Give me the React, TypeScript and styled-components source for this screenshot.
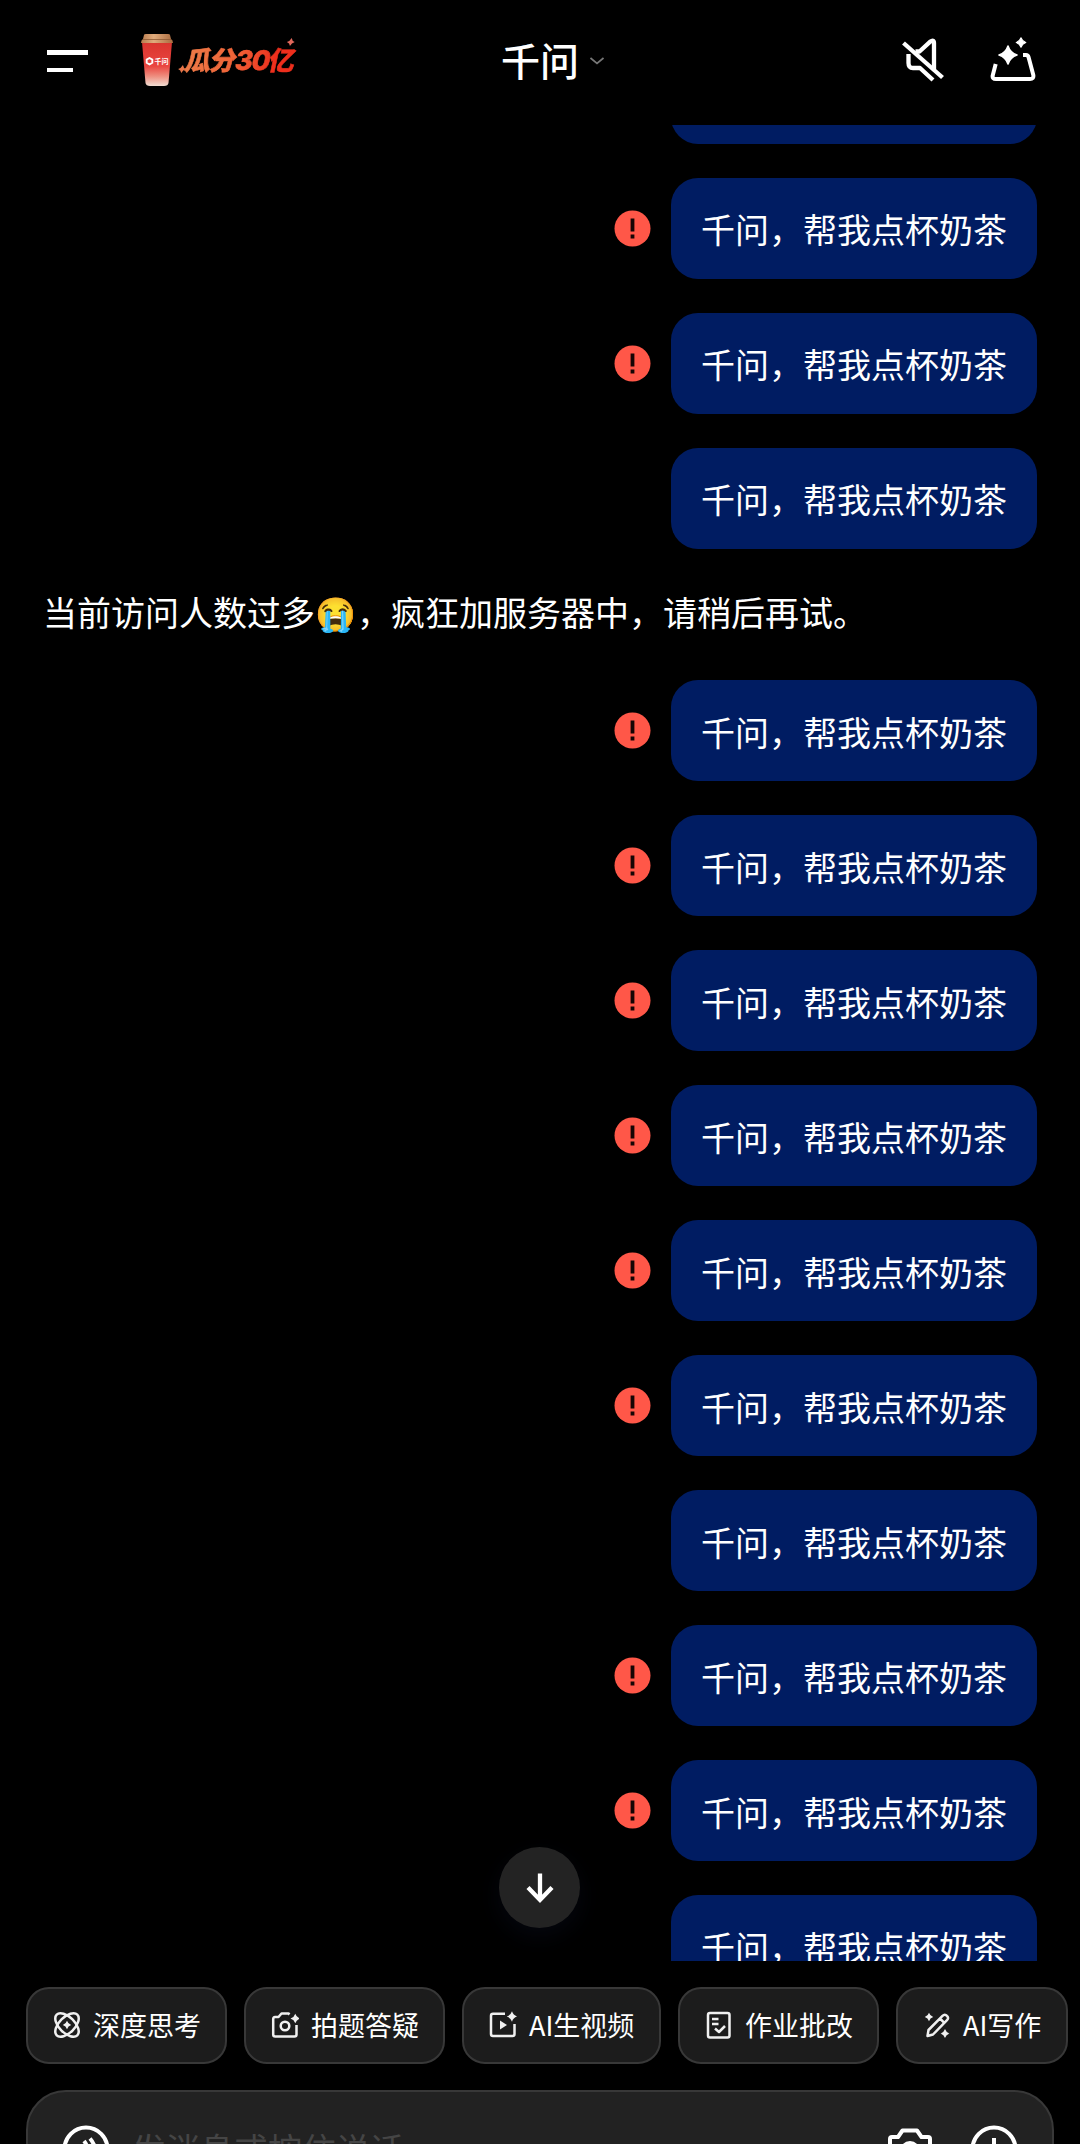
import React from "react";
import styled, { createGlobalStyle } from "styled-components";

const GlobalStyle = createGlobalStyle`
  body { margin: 0; background: #000; }
  * { box-sizing: border-box; }
`;

const Screen = styled.div`
  position: relative;
  display: flex;
  flex-direction: column;
  width: 1080px;
  height: 2144px;
  overflow: hidden;
  background: #000;
  color: #fff;
  font-family: "Noto Sans CJK SC", "Noto Color Emoji", sans-serif;
`;

const Header = styled.header`
  flex: none;
  display: grid;
  grid-template-columns: 454px 1fr auto;
  align-items: center;
  height: 125px;
  padding: 0 44px 5px 47px;
`;

const HeaderSide = styled.div<{ $end?: boolean }>`
  display: flex;
  align-items: center;
  justify-content: ${(p) => (p.$end ? "flex-end" : "flex-start")};
  gap: ${(p) => (p.$end ? "46px" : "0")};
`;

const MenuButton = styled.div`
  display: flex;
  flex-direction: column;
  gap: 13px;
  margin-top: 2px;
`;

const MenuBar = styled.span<{ $width: number }>`
  width: ${(p) => p.$width}px;
  height: 4.6px;
  background: #fff;
`;

const Promo = styled.div`
  display: flex;
  align-items: center;
  margin-left: 52px;
`;

const PromoLabel = styled.div`
  position: relative;
  margin: 0 0 0 9px;
  padding: 0 5px 0 3px;
  font-size: 26px;
  line-height: 36px;
  font-weight: 900;
  letter-spacing: -1.2px;
  transform: skewX(-12deg);
  color: transparent;
  -webkit-text-stroke: 0.6px transparent;
  background: linear-gradient(90deg, #ee7c48 0%, #ef6237 45%, #ee2e1c 80%);
  background-clip: text;
  -webkit-background-clip: text;
`;

const PromoAmount = styled.span`
  font-family: Inter, "Noto Sans CJK SC", sans-serif;
  font-weight: 800;
  font-size: 27px;
`;

const Spark = styled.svg<{ $x: number; $y: number }>`
  position: absolute;
  left: ${(p) => p.$x}px;
  top: ${(p) => p.$y}px;
`;

const Title = styled.h1`
  display: flex;
  align-items: center;
  gap: 11px;
  margin: 0 0 3px;
  font-size: 39px;
  line-height: 58px;
  font-weight: 500;
`;

const Chevron = styled.svg`
  margin-top: 4px;
`;

const Messages = styled.main`
  flex: none;
  display: flex;
  flex-direction: column;
  gap: 34px;
  height: 1836px;
  padding: 0 43px;
  overflow: hidden;

  & > :first-child {
    margin-top: -82.4px;
  }
`;

const MessageRow = styled.div`
  flex: none;
  display: flex;
  align-items: center;
  justify-content: flex-end;
  gap: 20px;
  height: 101px;
`;

const Bubble = styled.div`
  height: 101px;
  padding: 26.300px 30px 24.700px;
  border-radius: 27px;
  background: #001c62;
  font-size: 34px;
  line-height: 50px;
  white-space: nowrap;
`;

const Reply = styled.div`
  flex: none;
  display: flex;
  align-items: center;
  height: 63.7px;
  padding-bottom: 4px;
  font-size: 34px;
  line-height: 50px;
  white-space: nowrap;
`;

const Emoji = styled.span`
  width: 42px;
  text-align: center;
  font-size: 33px;
`;

const ScrollDown = styled.button`
  position: absolute;
  left: 499px;
  top: 1847px;
  display: flex;
  align-items: center;
  justify-content: center;
  width: 81px;
  height: 81px;
  padding: 0;
  border: 0;
  border-radius: 50%;
  background: #232323;
  box-shadow: 0 8px 24px rgba(20, 26, 60, 0.25);
`;

const Chips = styled.nav`
  flex: none;
  display: flex;
  gap: 17px;
  padding: 26.400px 0 0 26px;
`;

const Chip = styled.div<{ $width: number }>`
  flex: none;
  display: flex;
  align-items: center;
  gap: 12px;
  width: ${(p) => p.$width}px;
  height: 77px;
  padding: 0 0 1px 25px;
  border: 2px solid #383838;
  border-radius: 23px;
  background: #1c1c1c;
  font-size: 27px;
  line-height: 40px;
  white-space: nowrap;
`;

const Composer = styled.footer`
  flex: none;
  display: flex;
  align-items: center;
  width: 1028px;
  height: 118px;
  margin: 26px 0 0 26px;
  padding: 0 34px;
  border: 2px solid #383838;
  border-radius: 40px;
  background: #222;
`;

const Placeholder = styled.span`
  flex: 1;
  padding-left: 22px;
  font-size: 34px;
  line-height: 50px;
  color: #454545;
`;

const ComposerActions = styled.div`
  display: flex;
  align-items: center;
  gap: 37px;
`;

const star = (cx: number, cy: number, r: number) => {
  const k = r * 0.24;
  return `M${cx} ${cy - r}Q${cx + k} ${cy - k} ${cx + r} ${cy}Q${cx + k} ${cy + k} ${cx} ${cy + r}Q${cx - k} ${cy + k} ${cx - r} ${cy}Q${cx - k} ${cy - k} ${cx} ${cy - r}Z`;
};

const Cup = () => (
  <svg width="34" height="54" viewBox="0 0 34 54">
    <defs>
      <linearGradient id="cup" x1="0" y1="0" x2="0" y2="1">
        <stop offset="0" stopColor="#d9342e" />
        <stop offset="0.55" stopColor="#ea4640" />
        <stop offset="0.78" stopColor="#ee8f80" />
        <stop offset="1" stopColor="#f1ddd2" />
      </linearGradient>
      <linearGradient id="lid" x1="0" y1="0" x2="1" y2="0">
        <stop offset="0" stopColor="#b87b4d" />
        <stop offset="0.4" stopColor="#e0ab7c" />
        <stop offset="1" stopColor="#a96b3f" />
      </linearGradient>
    </defs>
    <path d="M2 9H32L28.500 50Q28 53 24 53H10Q6 53 5.500 50Z" fill="url(#cup)" />
    <path d="M4 2Q4 1 6 1H28Q30 1 30 2L31 6Q33 7 33 10H1Q1 7 3 6Z" fill="url(#lid)" />
    <path d="M3 6.500H31" stroke="#8d5934" strokeWidth="0.8" />
    <path d="M9.500 25L12.300 26.600V29.800L9.500 31.400L6.700 29.800V26.600Z" fill="none" stroke="#fff" strokeWidth="1.900" />
    <text x="14.500" y="31" fontSize="7" fontWeight="700" fill="#fff" fontFamily="Noto Sans CJK SC, sans-serif">千问</text>
  </svg>
);

const MutedIcon = () => (
  <svg width="42" height="44" viewBox="0 0 42 44" fill="none" stroke="#fff" strokeWidth="4.300" strokeLinejoin="round">
    <path d="M1.500 5L40.500 39.500" />
    <path d="M13.500 13.500H17.500L28 3.800Q32 1 32 5V31" />
    <path d="M6.500 16V25Q6.500 30 11 30H18L31 42" />
  </svg>
);

const MagicBoxIcon = () => (
  <svg width="46" height="48" viewBox="0 0 46 48" fill="none" stroke="#fff" strokeWidth="4" strokeLinejoin="round" strokeLinecap="butt">
    <path d="M33 19H36Q38 19 38.500 21L43.300 39Q44 43 40 43H6Q2 43 2.700 39.500L5.700 28" />
    <path d={star(18, 19, 9)} fill="#fff" stroke="#fff" strokeWidth="1.600" />
    <path d={star(31, 6.5, 4.8)} fill="#fff" stroke="#fff" strokeWidth="1.100" />
  </svg>
);

const ErrorIcon = () => (
  <svg width="37" height="37" viewBox="0 0 37 37">
    <circle cx="18.500" cy="18.500" r="18" fill="#ff5748" />
    <rect x="16.600" y="8.500" width="3.800" height="13" fill="#160504" />
    <rect x="16.600" y="24.500" width="3.800" height="4" fill="#160504" />
  </svg>
);

const ArrowIcon = () => (
  <svg width="30" height="32" viewBox="0 0 30 32" fill="none" stroke="#fff" strokeWidth="4.300">
    <path d="M15 1.500V28M3 15.500L15 28L27 15.500" />
  </svg>
);

type IconKind = "think" | "photo" | "video" | "check" | "write";

const ChipIcon = ({ kind }: { kind: IconKind }) => (
  <svg width="28" height="28" viewBox="0 0 28 28" fill="none" stroke="#f0f0f0" strokeWidth="2.500" strokeLinejoin="round">
    {kind === "think" && (
      <>
        <ellipse cx="14" cy="14" rx="14.600" ry="7.800" transform="rotate(45 14 14)" />
        <ellipse cx="14" cy="14" rx="14.600" ry="7.800" transform="rotate(-45 14 14)" />
        <path d={star(14, 14, 4.2)} fill="#f0f0f0" stroke="none" />
      </>
    )}
    {kind === "photo" && (
      <>
        <path d="M18.500 3.500L17.500 2.500H10.500L7.500 6H4Q2.200 6 2.200 8V23.500Q2.200 25.500 4.200 25.500H23.500Q25.500 25.500 25.500 23.500V14" />
        <circle cx="14" cy="15" r="4.300" />
        <path d={star(24.3, 7.500, 4.8)} fill="#f0f0f0" stroke="none" />
      </>
    )}
    {kind === "video" && (
      <>
        <path d="M16 2.800H4Q2 2.800 2 4.800V23Q2 25 4 25H23.500Q25.500 25 25.500 23V13" />
        <path d="M11 9.500L18 14L11 18.500Z" fill="#f0f0f0" stroke="none" />
        <path d={star(23, 5.500, 5.200)} fill="#f0f0f0" stroke="none" />
      </>
    )}
    {kind === "check" && (
      <>
        <rect x="3" y="2" width="21.500" height="24.500" rx="2" />
        <path d="M7 8H13.500M7 13H13.500M10 17.500L14 21L20 15" />
      </>
    )}
    {kind === "write" && (
      <>
        <path d="M4.500 25L5.500 19L19.500 4.800Q21.800 2.500 24 4.800Q26.200 7 24 9.200L10 23.500L4.500 25ZM17 7.500L21.300 11.800" />
        <path d={star(6, 6, 4.2)} fill="#f0f0f0" stroke="none" />
        <path d={star(22, 22.5, 4.4)} fill="#f0f0f0" stroke="none" />
      </>
    )}
  </svg>
);

const VoiceIcon = () => (
  <svg width="48" height="48" viewBox="0 0 48 48" fill="none" stroke="#fff" strokeWidth="4">
    <circle cx="24" cy="24" r="21.500" />
    <path d="M28 13.500Q33 19 34 28M22 16Q26 21 27 30M16 21Q19 25 19 31" />
  </svg>
);

const CameraIcon = () => (
  <svg width="46" height="48" viewBox="0 0 46 48" fill="none" stroke="#fff" strokeWidth="4" strokeLinejoin="round">
    <path d="M5 12H11L15.500 5.500H30L34.500 12H41Q43 12 43 14V39Q43 41 41 41H5Q3 41 3 39V14Q3 12 5 12Z" />
    <circle cx="23" cy="26" r="8" />
  </svg>
);

const PlusIcon = () => (
  <svg width="48" height="48" viewBox="0 0 48 48" fill="none" stroke="#fff" strokeWidth="4">
    <circle cx="24" cy="24" r="21.500" />
    <path d="M24 13V35M13 24H35" />
  </svg>
);

const UserMessage = ({ failed }: { failed?: boolean }) => (
  <MessageRow>
    {failed && <ErrorIcon />}
    <Bubble>千问，帮我点杯奶茶</Bubble>
  </MessageRow>
);

const before = [false, true, true, false];
const after = [true, true, true, true, true, true, false, true, true, false];

const chips: { kind: IconKind; label: string; width: number }[] = [
  { kind: "think", label: "深度思考", width: 201 },
  { kind: "photo", label: "拍题答疑", width: 201 },
  { kind: "video", label: "AI生视频", width: 199 },
  { kind: "check", label: "作业批改", width: 201 },
  { kind: "write", label: "AI写作", width: 172 },
];

export default function App() {
  return (
    <Screen>
      <GlobalStyle />
      <Header>
        <HeaderSide>
          <MenuButton>
            <MenuBar $width={41} />
            <MenuBar $width={26} />
          </MenuButton>
          <Promo>
            <Cup />
            <PromoLabel>
              瓜分<PromoAmount>30</PromoAmount>亿
              <Spark $x={-3} $y={24} width="8" height="8" viewBox="0 0 8 8">
                <path d={star(4, 4, 4)} fill="#e8764a" />
              </Spark>
              <Spark $x={100} $y={-3} width="8" height="8" viewBox="0 0 8 8">
                <path d={star(4, 4, 4)} fill="#e0685c" />
              </Spark>
            </PromoLabel>
          </Promo>
        </HeaderSide>
        <Title>
          千问
          <Chevron width="14" height="8" viewBox="0 0 14 8" fill="none" stroke="#777" strokeWidth="1.700">
            <path d="M0.500 1L7 6.500L13.500 1" />
          </Chevron>
        </Title>
        <HeaderSide $end>
          <MutedIcon />
          <MagicBoxIcon />
        </HeaderSide>
      </Header>

      <Messages>
        {before.map((failed, i) => (
          <UserMessage key={i} failed={failed} />
        ))}
        <Reply>
          当前访问人数过多<Emoji>😭</Emoji>，疯狂加服务器中，请稍后再试。
        </Reply>
        {after.map((failed, i) => (
          <UserMessage key={i} failed={failed} />
        ))}
      </Messages>

      <Chips>
        {chips.map((c) => (
          <Chip key={c.kind} $width={c.width}>
            <ChipIcon kind={c.kind} />
            {c.label}
          </Chip>
        ))}
      </Chips>

      <Composer>
        <VoiceIcon />
        <Placeholder>发消息或按住说话</Placeholder>
        <ComposerActions>
          <CameraIcon />
          <PlusIcon />
        </ComposerActions>
      </Composer>

      <ScrollDown aria-label="scroll">
        <ArrowIcon />
      </ScrollDown>
    </Screen>
  );
}
